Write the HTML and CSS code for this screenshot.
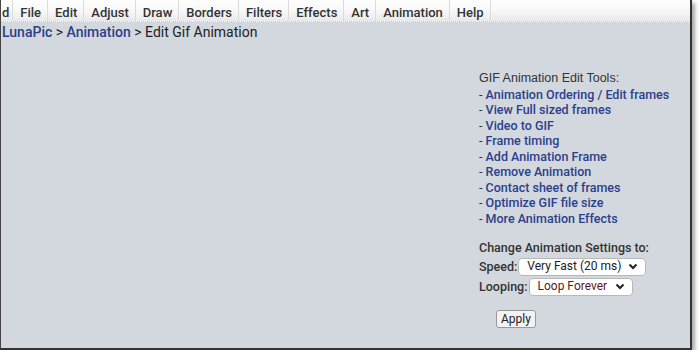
FILE: index.html
```html
<!DOCTYPE html>
<html>
<head>
    <title>LunaPic - Edit Gif Animation</title>
    <meta charset="UTF-8">
    <link rel="stylesheet" href="styles.css">
</head>
<body>

    <div class="window">
        <ul class="menu">
            <li class="first">d</li>
            <li>File</li>
            <li>Edit</li>
            <li>Adjust</li>
            <li>Draw</li>
            <li>Borders</li>
            <li>Filters</li>
            <li>Effects</li>
            <li>Art</li>
            <li>Animation</li>
            <li>Help</li>
        </ul>

        <div class="crumbs">
            <a href="#">LunaPic</a> &gt; <a href="#">Animation</a> &gt; Edit Gif Animation
        </div>

        <div class="tools">
            <p class="tools-title">GIF Animation Edit Tools:</p>
            <ul class="tool-list">
                <li>- <a href="#">Animation Ordering / Edit frames</a></li>
                <li>- <a href="#">View Full sized frames</a></li>
                <li>- <a href="#">Video to GIF</a></li>
                <li>- <a href="#">Frame timing</a></li>
                <li>- <a href="#">Add Animation Frame</a></li>
                <li>- <a href="#">Remove Animation</a></li>
                <li>- <a href="#">Contact sheet of frames</a></li>
                <li>- <a href="#">Optimize GIF file size</a></li>
                <li>- <a href="#">More Animation Effects</a></li>
            </ul>

            <form class="settings">
                <p class="settings-title">Change Animation Settings to:</p>
                <div class="row">
                    <label for="speed">Speed:</label>
                    <div class="select speed" id="speed">
                        <span>Very Fast (20 ms)</span>
                        <svg width="10" height="7" viewBox="0 0 10 7"><path d="M1.5 1.5 L5 5 L8.5 1.5" fill="none" stroke="#222" stroke-width="2"/></svg>
                    </div>
                </div>
                <div class="row">
                    <label for="loop">Looping:</label>
                    <div class="select loop" id="loop">
                        <span>Loop Forever</span>
                        <svg width="10" height="7" viewBox="0 0 10 7"><path d="M1.5 1.5 L5 5 L8.5 1.5" fill="none" stroke="#222" stroke-width="2"/></svg>
                    </div>
                </div>
                <button type="button">Apply</button>
            </form>
        </div>
    </div>

</body>
</html>
```

FILE: styles.css
```css
body {
    margin: 0;
    background: white;
    font-family: Roboto, "Open Sans", sans-serif;
}
.window {
    width: 689px;
    height: 348px;
    background-color: #d3d8df;
    border-left: 1px solid #444;
    border-right: 2px solid #333;
    border-bottom: 2px solid #333;
    box-shadow: 3px 3px 4px rgba(0,0,0,0.35);
    overflow: hidden;
}
.menu {
    display: flex;
    margin: 0;
    padding: 0;
    list-style: none;
    height: 21px;
    background: linear-gradient(#ffffff, #f7f7f7 55%, #e9e9e9);
    border-bottom: 1px dotted #c8c8c8;
}
.menu li {
    padding: 4px 6px 0 7px;
    font-size: 13px;
    font-weight: 500;
    line-height: 17px;
    color: #333;
    border-right: 1px solid #dcdcdc;
}
.menu .first {
    padding: 4px 3px 0 1px;
}
.crumbs {
    padding: 2px 0 0 1px;
    font-size: 14px;
    color: #222;
}
a {
    color: #2b3f8c;
    text-decoration: none;
    font-weight: 500;
}
.tools {
    margin: 31px 0 0 478px;
    font-size: 12.5px;
    line-height: 15.5px;
    color: #333;
}
.tools p {
    margin: 0;
}
.tools-title {
    font-family: "Liberation Sans", Arial, sans-serif;
    font-size: 12.5px;
}
.tool-list {
    margin: 0;
    padding: 0;
    list-style: none;
}
.settings {
    margin-top: 14px;
}
.settings-title {
    font-weight: 500;
}
.row {
    display: flex;
    align-items: center;
    gap: 1px;
    margin-top: 2px;
    font-weight: 500;
}
.select {
    box-sizing: border-box;
    display: flex;
    align-items: center;
    justify-content: space-between;
    height: 18px;
    padding: 0 7px 0 8px;
    font-size: 12px;
    font-weight: 400;
    border: 1px solid #b8b8b8;
    border-radius: 4px;
    background: white;
    color: #222;
}
.speed {
    width: 128px;
}
.loop {
    width: 104px;
    color: #5a1a22;
}
button {
    margin: 14px 0 0 17px;
    height: 18px;
    padding: 0 4px;
    font-family: Roboto, sans-serif;
    font-size: 12px;
    color: #222;
    background: #f3f3f3;
    border: 1px solid #999;
    border-radius: 3px;
}
```
